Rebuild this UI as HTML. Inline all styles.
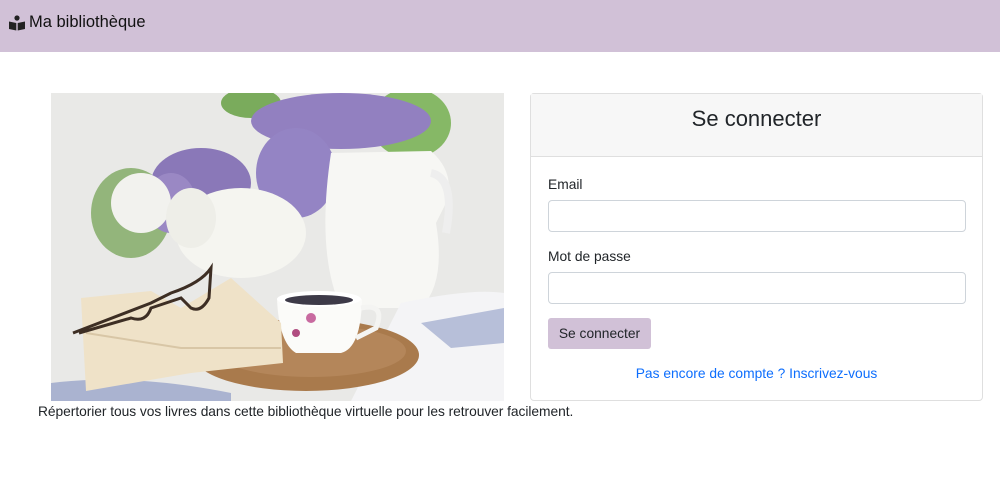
<!DOCTYPE html>
<html><head><meta charset="utf-8"><style>
body{margin:0;font-family:"Liberation Sans",sans-serif;background:#fff;width:1000px;height:487px;overflow:hidden;position:relative;color:#212529}
.nav{position:absolute;left:0;top:0;width:1000px;height:52px;background:#d1c1d7}
.brand{position:absolute;left:8px;top:13px;font-size:16.5px;color:#111;display:flex;align-items:center}
.img{position:absolute;left:51px;top:93px;width:453px;height:308px}
.card{position:absolute;left:530px;top:93px;width:451px;height:306px;border:1px solid #dfdfdf;border-radius:4px}
.hd{height:62px;background:#f7f7f7;border-bottom:1px solid #dfdfdf;text-align:center;font-size:22px;line-height:50px}
label{position:absolute;left:17px;font-size:13.8px;color:#212529}
.in{position:absolute;left:17px;width:416px;height:30px;border:1px solid #ced4da;border-radius:4px}
.btn{position:absolute;left:17px;top:224px;width:103px;height:31px;background:#d1c1d7;border-radius:3px;font-size:13.8px;line-height:31px;text-align:center}
.lk{position:absolute;left:0;width:451px;text-align:center;top:272px;font-size:13.8px;color:#0d6efd}
.desc{position:absolute;left:38px;top:404px;font-size:13.8px;letter-spacing:-0.05px}
</style></head><body>
<div class="nav"><div class="brand"><svg width="18" height="16" viewBox="0 0 18 16"><circle cx="9" cy="3" r="2.6" fill="#222"/><path d="M1 6.5 L8.3 8 V15.5 L1 14 Z M17 6.5 L9.7 8 V15.5 L17 14 Z" fill="#222"/></svg><span style="margin-left:3px">Ma bibliothèque</span></div></div>
<svg class="img" viewBox="0 0 453 308" preserveAspectRatio="none">
<rect width="453" height="308" fill="#e9e9e7"/>
<ellipse cx="80" cy="120" rx="40" ry="45" fill="#7da860" opacity=".8"/>
<ellipse cx="360" cy="30" rx="40" ry="35" fill="#86b866"/>
<ellipse cx="200" cy="10" rx="30" ry="15" fill="#7aab5c"/>
<ellipse cx="150" cy="90" rx="50" ry="35" fill="#8a78b8"/>
<ellipse cx="120" cy="110" rx="25" ry="30" fill="#9a88c4"/>
<ellipse cx="290" cy="28" rx="90" ry="28" fill="#9280c0"/>
<ellipse cx="245" cy="80" rx="40" ry="45" fill="#9484c4"/>
<ellipse cx="90" cy="110" rx="30" ry="30" fill="#f2f2ee"/>
<ellipse cx="190" cy="140" rx="65" ry="45" fill="#f5f5f0"/>
<ellipse cx="140" cy="125" rx="25" ry="30" fill="#eeeee8"/>
<path d="M280 60 L380 58 Q405 80 395 110 L385 130 Q395 190 370 215 L290 215 Q265 160 280 60 Z" fill="#f7f7f4"/>
<path d="M380 80 Q405 85 395 140" stroke="#eee" stroke-width="8" fill="none"/>
<path d="M350 210 Q420 195 453 200 L453 308 L300 308 Z" fill="#f4f4f6"/>
<path d="M370 230 L453 215 L453 250 L400 255 Z" fill="#b7bfd9"/>
<path d="M0 290 Q80 280 180 300 L180 308 L0 308 Z" fill="#aab3d0"/>
<ellipse cx="255" cy="262" rx="113" ry="36" fill="#a97a4c"/>
<ellipse cx="260" cy="258" rx="95" ry="26" fill="#b4865a"/>
<path d="M226 206 L311 206 Q310 255 290 260 L245 260 Q228 250 226 206 Z" fill="#fbfbf9"/>
<ellipse cx="268" cy="206" rx="42" ry="8" fill="#fff"/>
<ellipse cx="268" cy="207" rx="34" ry="5" fill="#3d3a48"/>
<circle cx="260" cy="225" r="5" fill="#c86aa0"/><circle cx="245" cy="240" r="4" fill="#b04c80"/>
<path d="M310 215 Q335 210 325 235 L305 245" stroke="#f4f4f2" stroke-width="5" fill="none"/>
<path d="M30 205 L100 198 L130 215 L180 185 L230 230 L232 270 L140 280 L35 298 Z" fill="#efe2c8"/>
<path d="M35 240 L130 255 L230 255" stroke="#d8c6a6" stroke-width="2" fill="none"/>
<path d="M22 240 L100 210 L120 200 Q150 190 160 175 L158 205 Q150 220 140 215 L130 205 L100 215 Q95 230 80 225 L28 240" stroke="#3d2e24" stroke-width="3" fill="none"/>
</svg>
<div class="card">
<div class="hd">Se connecter</div>
<label style="top:83px">Email</label>
<div class="in" style="top:106px"></div>
<label style="top:155px">Mot de passe</label>
<div class="in" style="top:178px"></div>
<div class="btn">Se connecter</div>
<div class="lk">Pas encore de compte ? Inscrivez-vous</div>
</div>
<div class="desc">Répertorier tous vos livres dans cette bibliothèque virtuelle pour les retrouver facilement.</div>
</body></html>
